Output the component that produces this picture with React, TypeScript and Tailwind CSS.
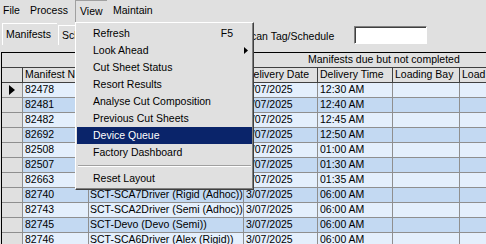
import React from 'react';

interface Row {
  no: string;
  driver: string;
  date: string;
  time: string;
}

const rows: Row[] = [
  { no: '82478', driver: 'SCT-SCA1Driver (Rigid (Adhoc))', date: '3/07/2025', time: '12:30 AM' },
  { no: '82481', driver: 'SCT-SCA3Driver (Semi (Adhoc))', date: '3/07/2025', time: '12:40 AM' },
  { no: '82482', driver: 'SCT-SCA4Driver (Rigid (Adhoc))', date: '3/07/2025', time: '12:45 AM' },
  { no: '82692', driver: 'SCT-SCA5Driver (Semi (Adhoc))', date: '3/07/2025', time: '12:50 AM' },
  { no: '82508', driver: 'SCT-SCA8Driver (Rigid (Adhoc))', date: '3/07/2025', time: '01:00 AM' },
  { no: '82507', driver: 'SCT-SCA9Driver (Semi (Adhoc))', date: '3/07/2025', time: '01:30 AM' },
  { no: '82663', driver: 'SCT-Devo (Devo (Rigid))', date: '3/07/2025', time: '01:35 AM' },
  { no: '82740', driver: 'SCT-SCA7Driver (Rigid (Adhoc))', date: '3/07/2025', time: '06:00 AM' },
  { no: '82743', driver: 'SCT-SCA2Driver (Semi (Adhoc))', date: '3/07/2025', time: '06:00 AM' },
  { no: '82745', driver: 'SCT-Devo (Devo (Semi))', date: '3/07/2025', time: '06:00 AM' },
  { no: '82746', driver: 'SCT-SCA6Driver (Alex (Rigid))', date: '3/07/2025', time: '06:00 AM' },
];

const menuItems = [
  { label: 'Refresh', shortcut: 'F5' },
  { label: 'Look Ahead', sub: true },
  { label: 'Cut Sheet Status' },
  { label: 'Resort Results' },
  { label: 'Analyse Cut Composition' },
  { label: 'Previous Cut Sheets' },
  { label: 'Device Queue', active: true },
  { label: 'Factory Dashboard' },
  { sep: true },
  { label: 'Reset Layout' },
];

const ViewMenu = () => (
  <div className="absolute left-[75px] top-[22px] w-[179px] bg-[#e0e0e0] border border-t-white border-l-white border-r-[#404040] border-b-[#404040] shadow-[inset_-1px_-1px_0_#808080] pt-[2px] pb-[2px] px-[1px]">
    {menuItems.map((item, i) =>
      item.sep ? (
        <div key={i} className="h-[9px] flex items-center px-[1px]">
          <div className="w-full border-t border-t-[#a0a0a0] border-b border-b-white" />
        </div>
      ) : (
        <div
          key={i}
          className={`h-[17px] flex items-center pl-[16px] ${item.active ? 'bg-[#0a246a] text-white' : 'text-black'}`}
        >
          <span className="flex-1 whitespace-nowrap">{item.label}</span>
          {item.shortcut && <span className="mr-[19px]">{item.shortcut}</span>}
          {item.sub && (
            <svg width="4" height="7" viewBox="0 0 4 7" className="mr-[4px]">
              <path d="M0 0 L4 3.5 L0 7 Z" fill="black" />
            </svg>
          )}
        </div>
      )
    )}
  </div>
);

const Grid = () => (
  <div className="ml-[1px] w-[600px] border-l border-t border-black">
    <div className="h-[15px] flex items-center pl-[306px] border-b border-[#404040] whitespace-nowrap">
      Manifests due but not completed
    </div>
    <div className="h-[15px] flex border-b border-[#404040] whitespace-nowrap">
      <div className="w-[21px] border-r border-[#404040]" />
      <div className="w-[66px] border-r border-[#404040] pl-[2px] flex items-center overflow-hidden">Manifest No.</div>
      <div className="w-[155px] border-r border-[#404040] pl-[2px] flex items-center overflow-hidden">Driver</div>
      <div className="w-[74px] border-r border-[#404040] pl-[2px] flex items-center overflow-hidden">Delivery Date</div>
      <div className="w-[75px] border-r border-[#404040] pl-[2px] flex items-center overflow-hidden">Delivery Time</div>
      <div className="w-[67px] border-r border-[#404040] pl-[2px] flex items-center overflow-hidden">Loading Bay</div>
      <div className="w-[90px] border-r border-[#404040] pl-[2px] flex items-center overflow-hidden">Load Status</div>
    </div>
    {rows.map((r, i) => (
      <div key={r.no} className={`h-[15px] flex whitespace-nowrap ${i % 2 === 0 ? 'bg-[#e4effc]' : 'bg-[#c3d9f2]'}`}>
        <div className="w-[21px] border-r border-b border-[#8f8f8f] bg-[#e0e0e0] flex items-center pl-[7px]">
          {i === 0 && (
            <svg width="6" height="10" viewBox="0 0 6 10">
              <path d="M0 0 L6 5 L0 10 Z" fill="black" />
            </svg>
          )}
        </div>
        <div className="w-[66px] border-r border-b border-[#8f8f8f] pl-[2px] flex items-center overflow-hidden">{r.no}</div>
        <div className="w-[155px] border-r border-b border-[#8f8f8f] pl-[1px] flex items-center overflow-hidden">{r.driver}</div>
        <div className="w-[74px] border-r border-b border-[#8f8f8f] pl-[2px] flex items-center overflow-hidden">{r.date}</div>
        <div className="w-[75px] border-r border-b border-[#8f8f8f] pl-[2px] flex items-center overflow-hidden">{r.time}</div>
        <div className="w-[67px] border-r border-b border-[#8f8f8f]" />
        <div className="w-[90px] border-r border-b border-[#8f8f8f]" />
      </div>
    ))}
  </div>
);

export default function App() {
  return (
    <div className="relative w-[486px] h-[244px] overflow-hidden bg-[#e0e0e0] text-black font-['Liberation_Sans',Arial,sans-serif] text-[10.5px]">
      {/* menu bar */}
      <div className="h-[22px] flex">
        <div className="w-[27px] pl-[3px] flex items-center">File</div>
        <div className="w-[48px] pl-[3px] flex items-center">Process</div>
        <div className="w-[32px] pl-[4px] flex items-center border-l border-t border-[#a0a0a0] border-r-white">View</div>
        <div className="pl-[6px] flex items-center">Maintain</div>
      </div>

      {/* tabs + scan box */}
      <div className="h-[30px] flex items-start">
        <div className="w-[244px] flex pl-[2px]">
          <div className="w-[55px] h-[22px] mt-[1px] pl-[3px] flex items-center border-l border-t border-white border-r-[#404040]">
            Manifests
          </div>
          <div className="w-[80px] h-[20px] mt-[3px] ml-[1px] pl-[3px] flex items-center border-l border-t border-white border-r-[#404040]">
            Schedules
          </div>
        </div>
        <div className="w-[110px] h-[30px] flex items-center whitespace-nowrap">Scan Tag/Schedule</div>
        <div className="w-[73px] h-[18px] mt-[4px] bg-white border border-t-[#808080] border-l-[#808080] border-r-white border-b-white shadow-[inset_1px_1px_0_#404040]" />
      </div>

      <Grid />
      <ViewMenu />
    </div>
  );
}
